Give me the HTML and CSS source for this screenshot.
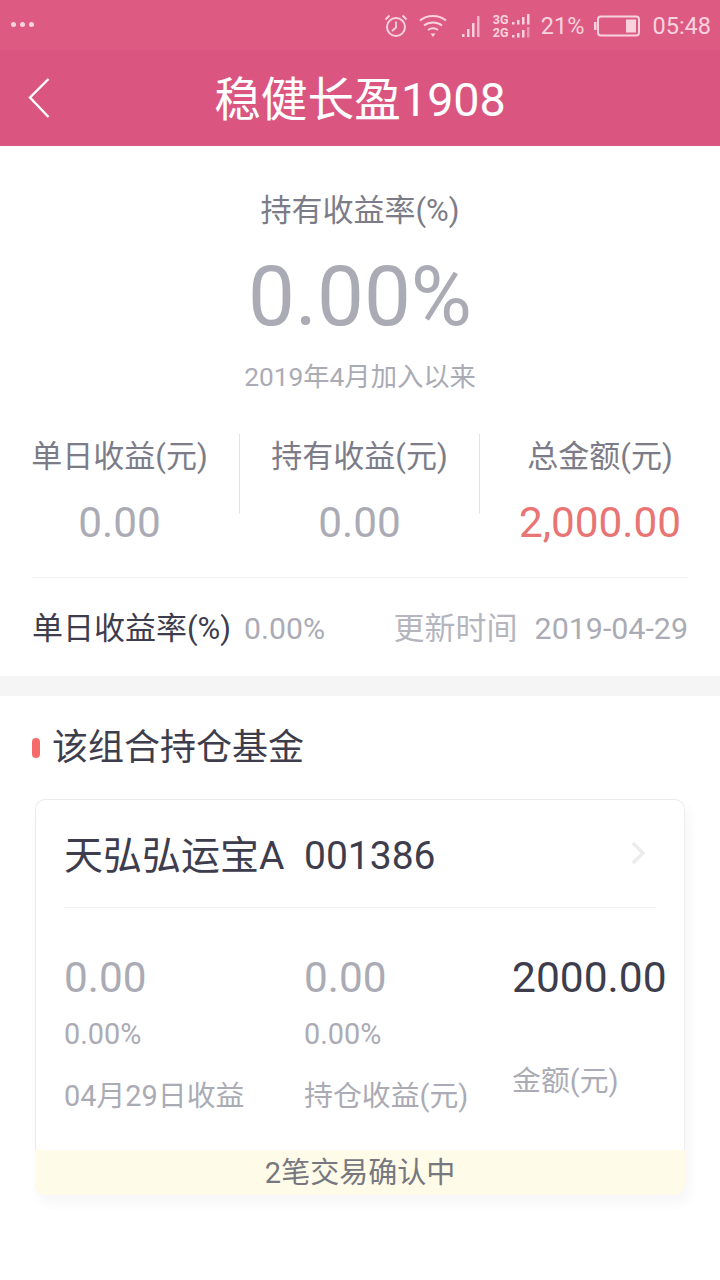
FILE: index.html
```html
<!DOCTYPE html>
<html lang="zh-CN">
<head>
<meta charset="utf-8">
<title>稳健长盈1908</title>
<link rel="stylesheet" href="styles.css">
</head>
<body>
<div class="status">
  <div class="dots"><i></i><i></i><i></i></div>
  <div class="status-right">
    <svg class="ic-alarm" width="24" height="24" viewBox="0 0 24 24" fill="none" stroke="#f8d3df" stroke-width="2"><circle cx="12" cy="13" r="9"/><path d="M12 7.5V13.5L8 17M1.5 5.5L5.5 1.5M22.5 5.5L18.5 1.5" stroke-width="1.8"/></svg>
    <svg class="ic-wifi" width="28" height="24" viewBox="0 0 28 24" fill="none" stroke="#f8d3df" stroke-width="2"><path d="M1 6.5C8 0.5 20 0.5 27 6.5M5 11.5C10 7.5 18 7.5 23 11.5M9 16C12 14 16 14 19 16"/><path d="M11.5 19.5h5L14 23z" fill="#f8d3df" stroke="none"/></svg>
    <svg class="ic-sig" width="20" height="24" viewBox="0 0 20 24" fill="#f8d3df"><rect x="0" y="20" width="2.5" height="3"/><rect x="5" y="15" width="2.5" height="8"/><rect x="10" y="9" width="2.5" height="14"/><rect x="15" y="2" width="2.5" height="21" opacity=".75"/></svg>
    <div class="net">
      <div class="net-row"><span class="net-t">3G</span><svg width="20" height="11" viewBox="0 0 20 11" fill="#f8d3df"><rect x="0" y="8" width="2.5" height="2.5"/><rect x="5" y="6" width="2.5" height="4.5"/><rect x="10" y="3" width="2.5" height="7.5"/><rect x="15" y="0" width="2.5" height="10.5"/></svg></div>
      <div class="net-row"><span class="net-t">2G</span><svg width="20" height="11" viewBox="0 0 20 11" fill="#f8d3df"><rect x="0" y="8" width="2.5" height="2.5"/><rect x="5" y="6" width="2.5" height="4.5"/><rect x="10" y="3" width="2.5" height="7.5"/><rect x="15" y="0" width="2.5" height="10.5" opacity=".5"/></svg></div>
    </div>
    <span class="st-text pct">21%</span>
    <svg class="ic-bat" width="46" height="22" viewBox="0 0 46 22" fill="none"><rect x="4" y="1.5" width="41" height="19" rx="3" stroke="#f8d3df" stroke-width="2"/><rect x="0" y="7" width="2.5" height="8" fill="#f8d3df"/><rect x="32" y="4.5" width="10" height="13" fill="#f8d3df"/></svg>
    <span class="st-text">05:48</span>
  </div>
</div>
<header class="nav">
  <svg class="back" width="22" height="40" viewBox="0 0 22 40" fill="none" stroke="#fff" stroke-width="2.4"><path d="M20.5 1L2 19.5L20.5 39"/></svg>
  <h1 class="nav-title">稳健长盈1908</h1>
</header>
<section class="summary">
  <div class="rate-label">持有收益率(%)</div>
  <div class="rate-value">0.00%</div>
  <div class="rate-since">2019年4月加入以来</div>
  <div class="stats">
    <div class="stat"><div class="stat-label">单日收益(元)</div><div class="stat-value">0.00</div></div>
    <div class="stat"><div class="stat-label">持有收益(元)</div><div class="stat-value">0.00</div></div>
    <div class="stat"><div class="stat-label">总金额(元)</div><div class="stat-value red">2,000.00</div></div>
  </div>
  <div class="meta">
    <span class="meta-key">单日收益率(%)</span>
    <span class="meta-val">0.00%</span>
    <span class="meta-upd">更新时间</span>
    <span class="meta-date">2019-04-29</span>
  </div>
</section>
<div class="band"></div>
<section class="holdings">
  <h2 class="sec-title"><i class="mark"></i>该组合持仓基金</h2>
  <div class="card">
    <div class="card-head">
      <span class="fund-name">天弘弘运宝A</span><span class="fund-code">001386</span>
      <svg class="chev" width="16" height="24" viewBox="0 0 16 24" fill="none" stroke="#ecebee" stroke-width="3.4"><path d="M3 2L13 12L3 22"/></svg>
    </div>
    <div class="card-body">
      <div class="col c1"><div class="big">0.00</div><div class="small">0.00%</div><div class="cap">04月29日收益</div></div>
      <div class="col c2"><div class="big">0.00</div><div class="small">0.00%</div><div class="cap">持仓收益(元)</div></div>
      <div class="col c3"><div class="big dark">2000.00</div><div class="cap amt">金额(元)</div></div>
    </div>
    <div class="notice">2笔交易确认中</div>
  </div>
</section>
</body>
</html>
```
FILE: styles.css
```css
* { box-sizing: border-box; }
html, body { margin: 0; padding: 0; }
body { width: 720px; height: 1280px; overflow: hidden; background: #fff; font-family: Roboto, "Noto Sans CJK SC", sans-serif; color: #3d3d4d; }
.status { height: 50px; background: #dd5b83; display: flex; justify-content: space-between; align-items: center; padding: 0 9px 0 11px; }
.dots { display: flex; gap: 4px; margin-top: -1px; }
.dots i { width: 5px; height: 5px; border-radius: 50%; background: #f8d3df; }
.status-right { display: flex; align-items: center; margin-top: 1px; }
.ic-alarm { margin-right: 11px; }
.ic-wifi { margin-right: 15px; }
.ic-sig { margin-right: 11px; }
.net { display: flex; flex-direction: column; gap: 2px; margin-right: 9px; }
.net-row { display: flex; align-items: center; gap: 1px; height: 11px; }
.net-t { font-size: 12.5px; font-weight: 700; color: #f8d3df; line-height: 11px; width: 18px; }
.st-text { font-size: 23.5px; color: #f8d3df; line-height: 28px; }
.pct { margin-right: 10px; }
.ic-bat { margin-right: 12px; }
.nav { height: 96px; background: #da5681; position: relative; display: flex; align-items: center; justify-content: center; }
.back { position: absolute; left: 28px; top: 28px; }
.nav-title { margin: 4px 0 0 0; font-size: 46.7px; font-weight: 400; color: #fff; line-height: 92px; }
.summary { height: 530px; padding-top: 45px; }
.rate-label { font-size: 31px; line-height: 40px; text-align: center; color: #7c7c88; }
.rate-value { font-size: 83.5px; line-height: 96px; margin-top: 18px; text-align: center; color: #ababb5; }
.rate-since { font-size: 26.3px; line-height: 36px; margin-top: 14px; text-align: center; color: #ababb5; }
.stats { display: grid; grid-template-columns: repeat(3, 240px); margin-top: 39px; }
.stat { height: 80px; text-align: center; border-right: 1px solid #e3e3e6; }
.stat:last-child { border-right: 0; }
.stat-label { font-size: 31px; line-height: 44px; color: #7c7c88; padding-top: 1px; height: 45px; }
.stat-value { font-size: 42.3px; line-height: 50px; margin-top: 19px; color: #ababb5; white-space: nowrap; }
.stat-value.red { color: #e87474; }
.meta { margin: 63px 32px 0; border-top: 1px solid #f2f2f3; height: 99px; display: flex; align-items: baseline; padding-top: 27px; line-height: 48px; }
.meta-key { font-size: 31px; color: #3d3d4d; }
.meta-val { font-size: 30.2px; color: #ababb5; margin-left: 13px; }
.meta-upd { font-size: 31px; margin-left: auto; margin-right: 17px; color: #b5b5be; }
.meta-date { font-size: 30.4px; color: #ababb5; }
.band { height: 20px; background: #f5f5f5; }
.sec-title { margin: 0; padding: 29px 0 0 32px; display: flex; align-items: center; font-size: 36px; font-weight: 400; line-height: 46px; color: #3d3d4d; }
.mark { width: 8px; height: 20px; border-radius: 4px; background: #f56b6b; margin-right: 12px; }
.card { margin: 28px 35px 0 35px; height: 396px; border: 1px solid #ececef; border-bottom: 0; border-radius: 10px; box-shadow: 4px 8px 12px rgba(120, 110, 140, .06); display: flex; flex-direction: column; }
.card-head { margin: 0 28px; height: 108px; border-bottom: 1px solid #f3f3f5; display: flex; align-items: baseline; padding-top: 27px; line-height: 58px; position: relative; }
.fund-name { font-size: 39px; width: 240px; }
.fund-code { font-size: 39px; }
.chev { position: absolute; right: 10px; top: 41px; }
.card-body { flex: 1; display: flex; padding-left: 28px; }
.col { width: 240px; padding-top: 45px; }
.c3 { width: 170px; margin-left: -32px; }
.big { font-size: 42.3px; line-height: 50px; color: #ababb5; }
.big.dark { color: #3d3d4d; font-size: 42.5px; }
.small { font-size: 28.8px; line-height: 36px; margin-top: 13px; color: #ababb5; }
.cap { font-size: 28.9px; line-height: 40px; margin-top: 24px; color: #ababb5; white-space: nowrap; }
.amt { margin-top: 58px; }
.notice { height: 45px; background: #fefbe8; text-align: center; font-size: 29px; line-height: 47px; color: #77777f; border-radius: 0 0 10px 10px; margin: 0 -1px; }
```
